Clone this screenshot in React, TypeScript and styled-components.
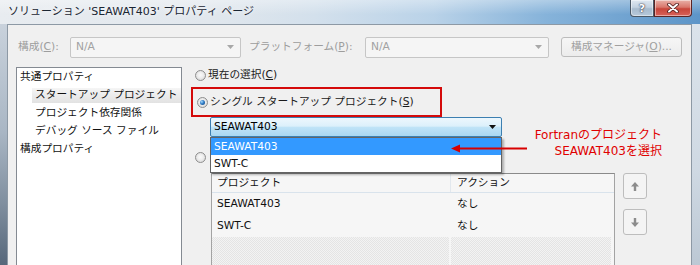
import React from 'react';
import styled, { createGlobalStyle } from 'styled-components';

const FONT = `"DejaVu Sans", "Noto Sans CJK JP", sans-serif`;

const GlobalStyle = createGlobalStyle`
  html, body { margin: 0; padding: 0; }
  body { width: 700px; height: 265px; overflow: hidden; background: #fff; font-family: ${FONT}; }
`;

const Window = styled.div`
  width: 700px;
  height: 265px;
  overflow: hidden;
  display: flex;
  flex-direction: column;
  font-family: ${FONT};
  font-size: 10.7px;
  color: #1a1a1a;
`;

const TitleBar = styled.div`
  height: 24px;
  flex: none;
  display: flex;
  align-items: flex-start;
  padding: 0 8px;
  background:
    linear-gradient(to bottom, rgba(255, 255, 255, 0.35), rgba(255, 255, 255, 0) 60%),
    linear-gradient(to right, #e8ecf0 0%, #e1e7ed 30%, #d3e0ec 45%, #b9d2e8 62%, #86b3da 78%, #5d95c8 100%);
`;

const Title = styled.div`
  flex: 1;
  font-size: 11px;
  line-height: 24px;
  color: #1b2633;
  white-space: nowrap;
  text-shadow: 0 0 5px rgba(255, 255, 255, 0.95);
`;

const CaptionButtons = styled.div`
  display: flex;
`;

const CaptionButton = styled.div<{ $variant: 'help' | 'close' }>`
  box-sizing: border-box;
  width: ${(p) => (p.$variant === 'close' ? 38 : 24)}px;
  height: 17px;
  display: flex;
  align-items: center;
  justify-content: center;
  border: 1px solid ${(p) => (p.$variant === 'close' ? '#5b2424' : '#4a5866')};
  border-top: none;
  border-radius: ${(p) => (p.$variant === 'close' ? '0 0 4px 0' : '0 0 0 4px')};
  background: ${(p) =>
    p.$variant === 'close'
      ? 'linear-gradient(to bottom, #e9b1a8 0%, #d9776c 45%, #c8453a 55%, #d8625a 100%)'
      : 'linear-gradient(to bottom, #dfe8f1 0%, #c3d2e1 45%, #a7bbce 55%, #b7c9da 100%)'};
  box-shadow: inset 0 0 0 1px rgba(255, 255, 255, 0.45);
  color: #fff;
  font-weight: bold;
  font-size: 11px;
  line-height: 1;
  text-shadow: 0 0 1px #223, 0 0 2px #334;
`;

const Body = styled.div`
  flex: 1;
  min-height: 0;
  display: flex;
`;

const FrameEdge = styled.div<{ $side: 'left' | 'right' }>`
  flex: none;
  width: ${(p) => (p.$side === 'left' ? 7 : 8)}px;
  background: ${(p) =>
    p.$side === 'left'
      ? 'linear-gradient(to bottom, #c9d2dc 0%, #a9b6c4 45%, #7f8e9e 75%, #56677a 100%)'
      : 'linear-gradient(to bottom, #dbe3eb 0%, #cfd9e3 60%, #bcc8d4 100%)'};
`;

const Content = styled.div`
  flex: 1;
  min-width: 0;
  box-sizing: border-box;
  border: 1px solid #8d99a5;
  border-bottom: none;
  background: #f0f0f0;
  padding: 12px 0 0 9px;
  display: flex;
  flex-direction: column;
`;

const TopRow = styled.div`
  display: flex;
  align-items: center;
  height: 20px;
  padding-left: 1px;
  flex: none;
`;

const FieldLabel = styled.span<{ $width: number; $gap?: number }>`
  width: ${(p) => p.$width}px;
  margin-left: ${(p) => p.$gap ?? 0}px;
  flex: none;
  color: #9d9d9d;
  line-height: 16px;
  white-space: nowrap;
`;

const Key = styled.span`
  text-decoration: underline;
`;

const DisabledCombo = styled.div<{ $width: number }>`
  box-sizing: border-box;
  width: ${(p) => p.$width}px;
  height: 21px;
  flex: none;
  border: 1px solid #c6c6c6;
  border-radius: 2px;
  background: #f5f5f5;
  display: flex;
  align-items: center;
  justify-content: space-between;
  padding: 0 6px 0 5px;
  color: #a2a2a2;
  line-height: 16px;
`;

const DisabledButton = styled.div<{ $gap: number }>`
  box-sizing: border-box;
  width: 121px;
  height: 20px;
  margin-left: ${(p) => p.$gap}px;
  flex: none;
  border: 1px solid #bcbcbc;
  border-radius: 3px;
  background: linear-gradient(to bottom, #f6f6f6, #ececec);
  color: #a0a0a0;
  display: flex;
  align-items: center;
  justify-content: center;
  line-height: 16px;
  white-space: nowrap;
`;

const MainRow = styled.div`
  flex: 1;
  min-height: 0;
  display: flex;
  align-items: flex-start;
  margin-top: 10px;
`;

const TreePanel = styled.div`
  box-sizing: border-box;
  width: 166px;
  height: 220px;
  flex: none;
  margin-left: -1px;
  background: #fff;
  border: 1px solid #848a92;
  display: flex;
  flex-direction: column;
`;

const TreeItem = styled.div<{ $level: number; $selected?: boolean }>`
  height: 18px;
  line-height: 18px;
  margin-left: ${(p) => (p.$level === 1 ? 15 : 0)}px;
  padding-left: 3px;
  white-space: nowrap;
  color: #111;
  background: ${(p) =>
    p.$selected
      ? 'linear-gradient(to bottom, transparent 2px, #f5f5f5 2px, #e2e2e2 17px, transparent 17px)'
      : 'transparent'};
`;

const RightArea = styled.div`
  flex: 1;
  min-width: 0;
  margin-left: 9px;
  display: flex;
  flex-direction: column;
  align-items: flex-start;
`;

const RadioRow = styled.div<{ $top?: number }>`
  display: flex;
  align-items: center;
  gap: 2px;
  height: 16px;
  padding-left: 4px;
  margin-top: ${(p) => p.$top ?? 0}px;
  line-height: 16px;
  white-space: nowrap;
`;

const RadioCircle = styled.span<{ $checked?: boolean }>`
  box-sizing: border-box;
  width: 11px;
  height: 11px;
  flex: none;
  border-radius: 50%;
  border: 1px solid #8e8e8e;
  background: radial-gradient(circle at 50% 45%, #fafafa 0%, #eeeeee 40%, #cfcfcf 100%);
  display: inline-flex;
  align-items: center;
  justify-content: center;
  &::after {
    content: '';
    width: 5px;
    height: 5px;
    border-radius: 50%;
    display: ${(p) => (p.$checked ? 'block' : 'none')};
    background: radial-gradient(circle at 35% 35%, #a9dcff 0%, #2f7cc6 45%, #113f78 100%);
  }
`;

const RedBox = styled.div`
  box-sizing: border-box;
  width: 251px;
  height: 30px;
  margin-top: 4px;
  border: 2px solid #d40a0a;
  display: flex;
  align-items: center;
  padding-left: 0;
`;

const ComboWrap = styled.div`
  position: relative;
  margin-left: 19px;
  width: 292px;
  height: 20px;
  flex: none;
`;

const ActiveCombo = styled.div`
  box-sizing: border-box;
  width: 100%;
  height: 100%;
  border: 1px solid #3c7fb1;
  border-radius: 2px;
  background: linear-gradient(to bottom, #edf7fd 0%, #dcf0fb 45%, #bfe3f7 52%, #a9d7f2 100%);
  display: flex;
  align-items: center;
  justify-content: space-between;
  padding: 0 5px 0 3px;
  line-height: 16px;
  color: #000;
`;

const DropList = styled.div`
  position: absolute;
  left: 0;
  top: 100%;
  width: 292px;
  box-sizing: border-box;
  border: 1px solid #646464;
  background: #fff;
  padding: 0;
  z-index: 5;
  box-shadow: 2px 2px 2px rgba(0, 0, 0, 0.28);
`;

const DropItem = styled.div<{ $selected?: boolean }>`
  height: 17px;
  line-height: 17px;
  padding-left: 3px;
  background: ${(p) => (p.$selected ? '#3399ff' : 'transparent')};
  color: ${(p) => (p.$selected ? '#fff' : '#111')};
`;

const ArrowNote = styled.svg`
  position: absolute;
  left: 241px;
  top: 27px;
  z-index: 6;
`;

const NoteText = styled.div`
  position: absolute;
  left: 318px;
  top: 10px;
  width: 134px;
  text-align: right;
  color: #e00000;
  font-size: 12px;
  line-height: 16px;
  white-space: nowrap;
`;

const TableRow = styled.div`
  display: flex;
  align-items: flex-start;
  gap: 8px;
  margin-top: 8px;
  margin-left: 20px;
`;

const Table = styled.div`
  box-sizing: border-box;
  width: 404px;
  height: 120px;
  border: 1px solid #a3a3a3;
  border-top-color: #8a8a8a;
  background: #f6f6f6;
  display: flex;
  flex-direction: column;
`;

const GridLine = styled.div<{ $header?: boolean }>`
  display: grid;
  grid-template-columns: 239px 1fr;
  height: ${(p) => (p.$header ? 18 : 22)}px;
  line-height: ${(p) => (p.$header ? 18 : 22)}px;
  border-bottom: ${(p) => (p.$header ? '1px solid #d9e3ec' : 'none')};
  flex: none;
  color: #111;
`;

const Cell = styled.div<{ $first?: boolean; $header?: boolean }>`
  padding-left: ${(p) => (p.$first ? 5 : 6)}px;
  white-space: nowrap;
  border-right: ${(p) => (p.$header && p.$first ? '1px solid #e2e8ee' : 'none')};
`;

const EmptyFill = styled.div`
  flex: 1;
  display: grid;
  grid-template-columns: 237px 1fr;
  gap: 2px;
  padding: 0 3px 0 0;
`;

const Dotted = styled.div`
  background: repeating-conic-gradient(#e4e4e4 0 25%, #f3f3f3 0 50%) 0 0 / 2px 2px;
`;

const MoveButtons = styled.div`
  display: flex;
  flex-direction: column;
  gap: 10px;
`;

const MoveButton = styled.div`
  box-sizing: border-box;
  width: 24px;
  height: 26px;
  border: 1px solid #bdbdbd;
  border-radius: 3px;
  background: #f4f4f4;
  display: flex;
  align-items: center;
  justify-content: center;
`;

const ComboArrow = ({ color }: { color: string }) => (
  <svg width="7" height="4" viewBox="0 0 7 4">
    <polygon points="0,0 7,0 3.5,4" fill={color} />
  </svg>
);

const MoveArrow = ({ dir }: { dir: 'up' | 'down' }) => (
  <svg width="8" height="9" viewBox="0 0 8 9" style={{ transform: dir === 'down' ? 'rotate(180deg)' : undefined }}>
    <polygon points="4,0 8,4.5 5.2,4.5 5.2,9 2.8,9 2.8,4.5 0,4.5" fill="#8c8c8c" />
  </svg>
);

const CloseGlyph = () => (
  <svg width="12" height="10" viewBox="0 0 12 10">
    <path d="M2 1.5 L10 8.5 M10 1.5 L2 8.5" stroke="#4a1a1a" strokeWidth="3.6" strokeLinecap="round" />
    <path d="M2 1.5 L10 8.5 M10 1.5 L2 8.5" stroke="#ffffff" strokeWidth="2" strokeLinecap="round" />
  </svg>
);

export default function App() {
  return (
    <>
      <GlobalStyle />
      <Window>
        <TitleBar>
          <Title>ソリューション 'SEAWAT403' プロパティ ページ</Title>
          <CaptionButtons>
            <CaptionButton $variant="help">?</CaptionButton>
            <CaptionButton $variant="close">
              <CloseGlyph />
            </CaptionButton>
          </CaptionButtons>
        </TitleBar>
        <Body>
          <FrameEdge $side="left" />
          <Content>
            <TopRow>
              <FieldLabel $width={52}>
                構成(<Key>C</Key>):
              </FieldLabel>
              <DisabledCombo $width={171}>
                <span>N/A</span>
                <ComboArrow color="#a8a8a8" />
              </DisabledCombo>
              <FieldLabel $width={116} $gap={8}>
                プラットフォーム(<Key>P</Key>):
              </FieldLabel>
              <DisabledCombo $width={184}>
                <span>N/A</span>
                <ComboArrow color="#a8a8a8" />
              </DisabledCombo>
              <DisabledButton $gap={12}>
                構成マネージャ(<Key>O</Key>)...
              </DisabledButton>
            </TopRow>
            <MainRow>
              <TreePanel>
                <TreeItem $level={0}>共通プロパティ</TreeItem>
                <TreeItem $level={1} $selected>
                  スタートアップ プロジェクト
                </TreeItem>
                <TreeItem $level={1}>プロジェクト依存関係</TreeItem>
                <TreeItem $level={1}>デバッグ ソース ファイル</TreeItem>
                <TreeItem $level={0}>構成プロパティ</TreeItem>
              </TreePanel>
              <RightArea>
                <RadioRow>
                  <RadioCircle />
                  <span>
                    現在の選択(<Key>C</Key>)
                  </span>
                </RadioRow>
                <RedBox>
                  <RadioRow>
                    <RadioCircle $checked />
                    <span>
                      シングル スタートアップ プロジェクト(<Key>S</Key>)
                    </span>
                  </RadioRow>
                </RedBox>
                <ComboWrap>
                  <ActiveCombo>
                    <span>SEAWAT403</span>
                    <ComboArrow color="#111" />
                  </ActiveCombo>
                  <DropList>
                    <DropItem $selected>SEAWAT403</DropItem>
                    <DropItem>SWT-C</DropItem>
                  </DropList>
                  <ArrowNote width="76" height="9" viewBox="0 0 76 9">
                    <line x1="7" y1="4.5" x2="76" y2="4.5" stroke="#d80000" strokeWidth="2" />
                    <polygon points="0,4.5 9,0.5 9,8.5" fill="#d80000" />
                  </ArrowNote>
                  <NoteText>
                    Fortranのプロジェクト
                    <br />
                    SEAWAT403を選択
                  </NoteText>
                </ComboWrap>
                <RadioRow $top={12}>
                  <RadioCircle />
                </RadioRow>
                <TableRow>
                  <Table>
                    <GridLine $header>
                      <Cell $first $header>
                        プロジェクト
                      </Cell>
                      <Cell $header>アクション</Cell>
                    </GridLine>
                    <GridLine>
                      <Cell $first>SEAWAT403</Cell>
                      <Cell>なし</Cell>
                    </GridLine>
                    <GridLine>
                      <Cell $first>SWT-C</Cell>
                      <Cell>なし</Cell>
                    </GridLine>
                    <EmptyFill>
                      <Dotted />
                      <Dotted />
                    </EmptyFill>
                  </Table>
                  <MoveButtons>
                    <MoveButton>
                      <MoveArrow dir="up" />
                    </MoveButton>
                    <MoveButton>
                      <MoveArrow dir="down" />
                    </MoveButton>
                  </MoveButtons>
                </TableRow>
              </RightArea>
            </MainRow>
          </Content>
          <FrameEdge $side="right" />
        </Body>
      </Window>
    </>
  );
}
